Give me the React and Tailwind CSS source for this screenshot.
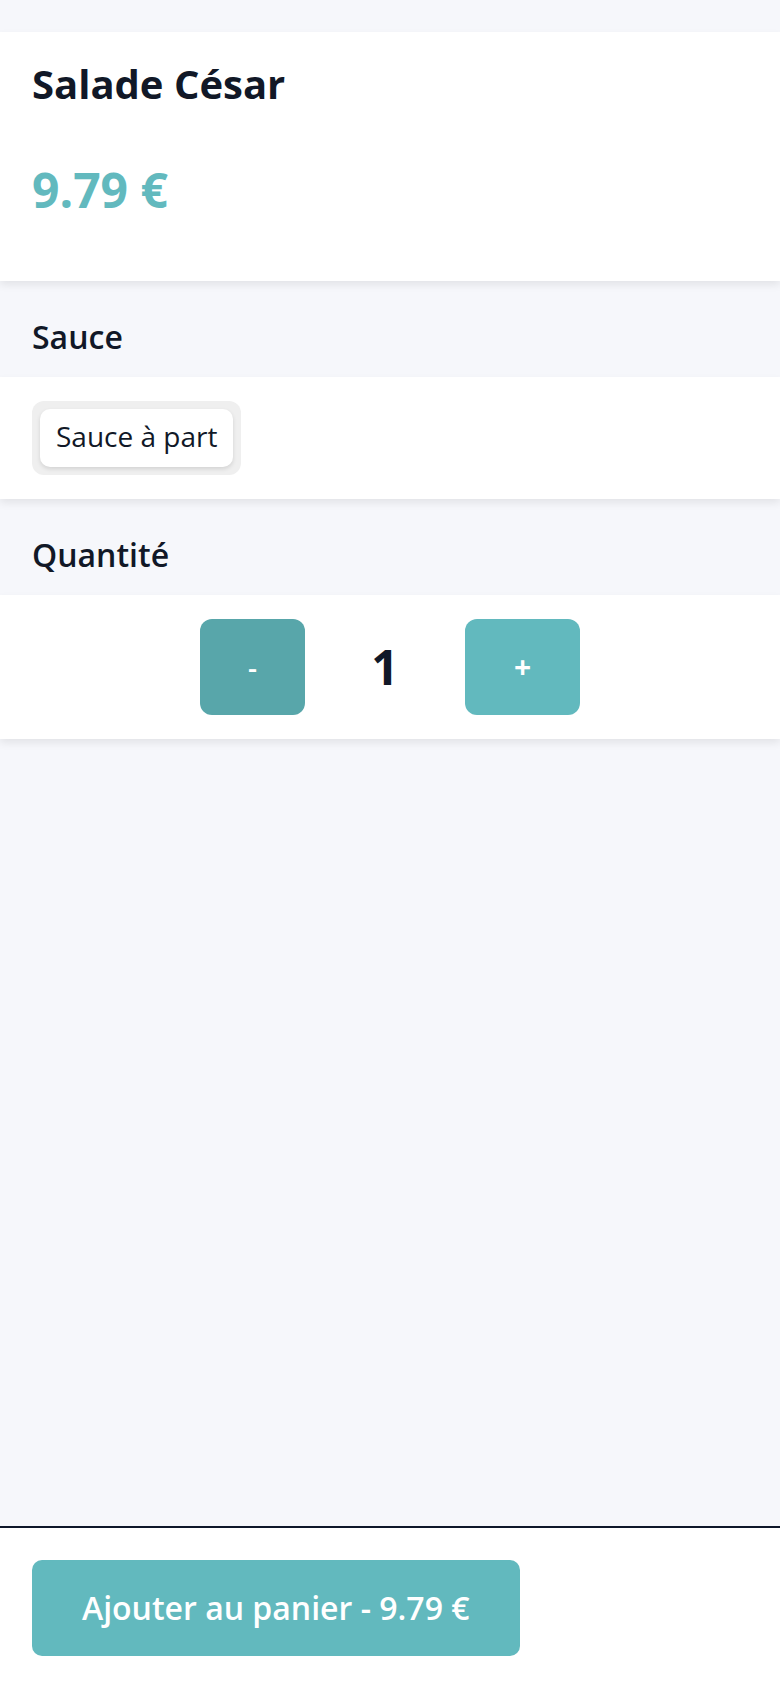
function App() {
  return (
    <main
      className="flex min-h-screen flex-col bg-[#f6f7fb] text-[#111827]"
      style={{ fontFamily: '"Open Sans", "Noto Sans", sans-serif' }}
    >
      <div className="flex-1 pt-[32px]">
        <section className="bg-white px-[32px] pt-[24px] pb-[59px] shadow-[0_4px_8px_rgba(0,0,0,0.08)]">
          <h1 className="text-[40px] leading-[56px] font-bold">Salade César</h1>
          <p className="mt-[46px] text-[48px] leading-[64px] font-bold text-[#62b9be]">
            9.79 €
          </p>
        </section>

        <h2 className="px-[32px] pt-[32px] pb-[16px] text-[32px] leading-[48px] font-semibold">
          Sauce
        </h2>
        <section className="bg-white px-[32px] py-[24px] shadow-[0_4px_8px_rgba(0,0,0,0.08)]">
          <div className="inline-flex rounded-[12px] bg-[#efefef] p-[8px]">
            <button className="rounded-[10px] bg-white px-[16px] pt-[7px] pb-[11px] text-[28px] leading-[40px] shadow-[0_2px_4px_rgba(0,0,0,0.12)]">
              Sauce à part
            </button>
          </div>
        </section>

        <h2 className="px-[32px] pt-[32px] pb-[16px] text-[32px] leading-[48px] font-semibold">
          Quantité
        </h2>
        <section className="flex items-center justify-center gap-[64px] bg-white py-[24px] shadow-[0_4px_8px_rgba(0,0,0,0.08)]">
          <button className="rounded-[12px] bg-[#58a6aa] px-[48px] py-[28px] text-[28px] leading-[40px] font-semibold text-white">
            -
          </button>
          <span className="w-[32px] text-center text-[48px] leading-[64px] font-bold">1</span>
          <button className="rounded-[12px] bg-[#62b9be] px-[49px] py-[28px] text-[30px] leading-[40px] font-bold text-white">
            +
          </button>
        </section>
      </div>

      <footer className="border-t-2 border-[#0f172a] bg-white px-[32px] pt-[32px] pb-[32px]">
        <button className="rounded-[10px] bg-[#62b9be] px-[50px] py-[24px] text-[32px] leading-[48px] font-semibold text-white">
          Ajouter au panier - 9.79 €
        </button>
      </footer>
    </main>
  )
}

export default App
